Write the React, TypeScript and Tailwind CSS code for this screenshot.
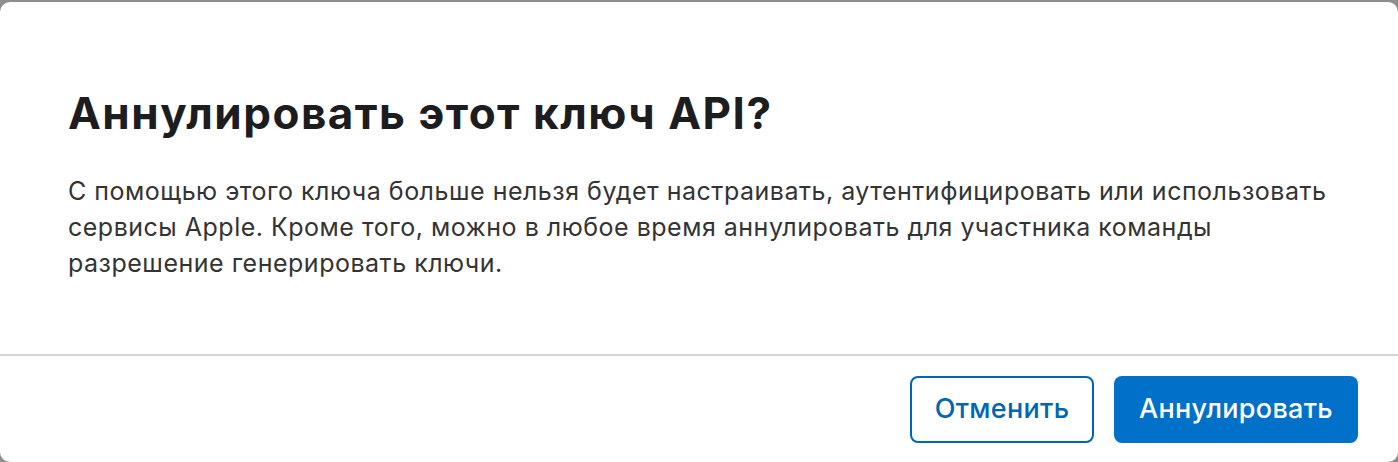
export default function App() {
  return (
    <div className="h-screen bg-[#8e8e8e] pt-[2px] font-['Inter','Liberation_Sans',sans-serif]">
      <div className="flex h-[460px] flex-col rounded-[10px] bg-white">
        {/* Body */}
        <div className="h-[352px] px-[68px] pt-[85px]">
          <h1 className="text-[44px] font-bold leading-[52px] tracking-[1.5px] text-[#1d1d1f]">
            Аннулировать этот ключ API?
          </h1>
          <p className="mt-[34px] whitespace-nowrap text-[25px] leading-[36px] tracking-[0.5px] text-[#333333]">
            С помощью этого ключа больше нельзя будет настраивать, аутентифицировать или использовать
            <br />
            сервисы Apple. Кроме того, можно в любое время аннулировать для участника команды
            <br />
            разрешение генерировать ключи.
          </p>
        </div>

        {/* Footer */}
        <div className="flex justify-end gap-[20px] border-t-2 border-[#d6d6d6] pr-[40px] pt-[20px]">
          <button className="h-[67px] w-[184px] rounded-[8px] border-2 border-[#0066b3] bg-white text-[27px] font-medium tracking-[0.3px] text-[#0066b3]">
            Отменить
          </button>
          <button className="h-[67px] w-[244px] rounded-[8px] bg-[#0070c9] text-[27px] font-medium tracking-[0.3px] text-white">
            Аннулировать
          </button>
        </div>
      </div>
    </div>
  );
}
